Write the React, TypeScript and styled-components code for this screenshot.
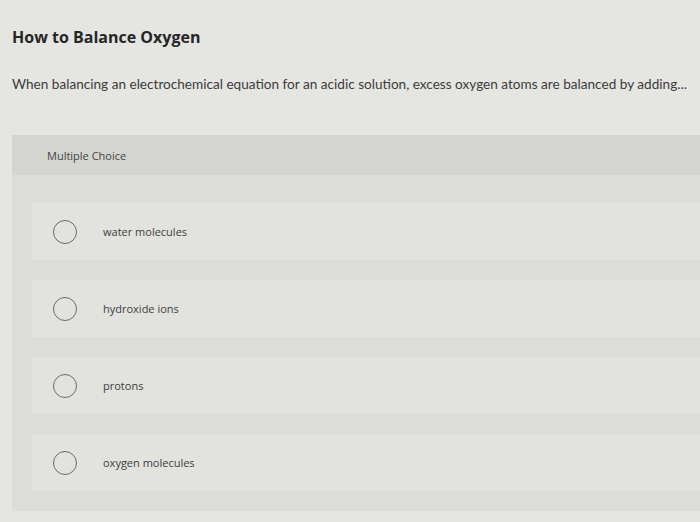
import React from "react";
import styled, { createGlobalStyle } from "styled-components";

const Global = createGlobalStyle`
  html, body { margin: 0; padding: 0; background: #e5e5e1; }
  body { font-family: "Open Sans", "Liberation Sans", sans-serif; color: #2b2b2b; overflow: hidden; }
`;

const Page = styled.div`
  width: 700px;
  height: 522px;
  padding: 27px 0 0 12px;
  box-sizing: border-box;
  background: #e5e5e1;
`;

const Title = styled.h1`
  margin: 0;
  font-size: 16px;
  font-weight: 700;
  line-height: 20px;
  color: #262626;
`;

const Prompt = styled.p`
  margin: 28px 0 0;
  font-family: Lato, "Open Sans", sans-serif;
  font-size: 13.6px;
  line-height: 18px;
  color: #3c3c3c;
  white-space: nowrap;
`;

const Panel = styled.section`
  margin-top: 42px;
  background: #dcdcd8;
  padding-bottom: 20px;
`;

const PanelHeader = styled.div`
  height: 40px;
  display: flex;
  align-items: center;
  padding-left: 35px;
  background: #d4d4d0;
  font-size: 11px;
  color: #444;
`;

const Options = styled.div`
  display: flex;
  flex-direction: column;
  gap: 20px;
  padding: 28px 0 0 20px;
`;

const Option = styled.label`
  height: 57px;
  display: flex;
  align-items: center;
  padding-left: 21px;
  background: #e2e2de;
  cursor: pointer;
`;

const Radio = styled.span`
  width: 22px;
  height: 22px;
  border: 1.5px solid #6a6a6a;
  border-radius: 50%;
  flex: none;
`;

const OptionText = styled.span`
  margin-left: 26px;
  font-size: 11px;
  color: #3e3e3e;
`;

const choices = ["water molecules", "hydroxide ions", "protons", "oxygen molecules"];

export default function App() {
  return (
    <Page>
      <Global />
      <Title>How to Balance Oxygen</Title>
      <Prompt>
        When balancing an electrochemical equation for an acidic solution, excess oxygen atoms are balanced by adding...
      </Prompt>
      <Panel>
        <PanelHeader>Multiple Choice</PanelHeader>
        <Options>
          {choices.map((c) => (
            <Option key={c}>
              <Radio />
              <OptionText>{c}</OptionText>
            </Option>
          ))}
        </Options>
      </Panel>
    </Page>
  );
}
